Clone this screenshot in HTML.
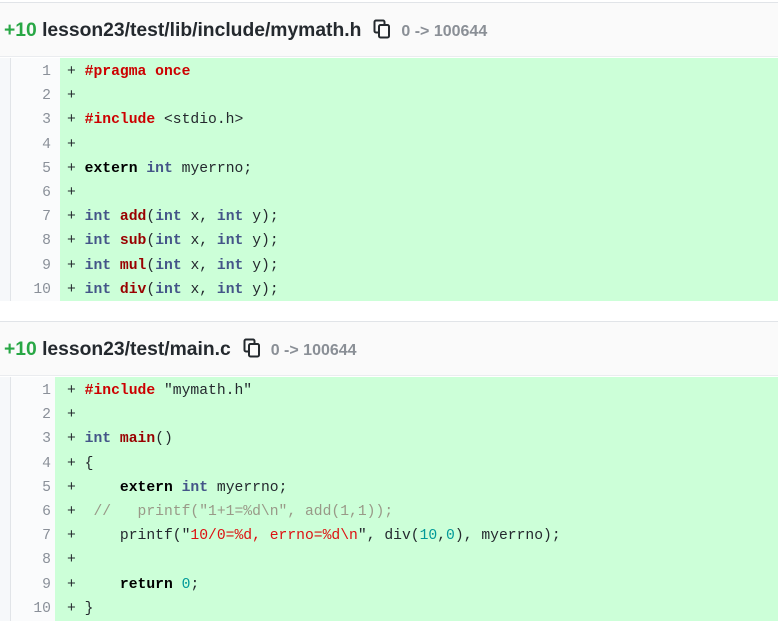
<!DOCTYPE html>
<html><head><meta charset="utf-8"><style>
*{margin:0;padding:0;box-sizing:border-box}
body{width:778px;height:637px;background:#fff;position:relative;overflow:hidden;font-family:"Liberation Sans",sans-serif}
.hdr{position:absolute;left:0;width:778px;height:55px;background:#fafafa;border-top:1px solid #e1e4e8;border-bottom:1px solid #eaecef}
.hdr .t{position:absolute;left:4px;top:16px;font-size:19.3px;font-weight:bold;color:#24292e;white-space:nowrap}
.hdr .t b{color:#28a745}
.hdr .m{font-size:16px;color:#8a8f96;font-weight:bold}
.blk{position:absolute;left:0;width:778px;background:#ccffd8}
.side{position:absolute;left:0;top:0;bottom:0;width:11px;background:#f6f8fa;border-right:1px solid #e1e4e8}
.gut{position:absolute;left:11px;top:0;bottom:0;background:#fafbfc}
.ln{position:absolute;height:24.2px;line-height:24.2px;font-family:"Liberation Mono",monospace;font-size:14.7px;white-space:pre;color:#24292e;margin-top:2px}
.n{color:#8a9099;text-align:right}
.k{font-weight:bold;color:#000}
.p{font-weight:bold;color:#c00}
.ty{font-weight:bold;color:#445588}
.f{font-weight:bold;color:#990000}
.s{color:#dd1111}
.num{color:#009999}
.c{color:#999988}
.cp{display:inline-block;vertical-align:-3px;margin:0 10px 0 12px}
</style></head><body>

<div class="hdr" style="top:2px"><div class="t"><b>+10</b> lesson23/test/lib/include/mymath.h<svg class="cp" width="18" height="20" viewBox="0 0 18 20"><rect x="1.5" y="1.5" width="10" height="12" rx="1.5" fill="none" stroke="#24292e" stroke-width="2"/><rect x="6" y="6" width="10" height="12.5" rx="1.5" fill="#fafafa" stroke="#24292e" stroke-width="2"/></svg><span class="m">0 -&gt; 100644</span></div></div>

<div class="blk" style="top:58px;height:243px">
<div class="side"></div><div class="gut" style="width:49px"></div>
</div>

<div class="hdr" style="top:321px"><div class="t"><b>+10</b> lesson23/test/main.c<svg class="cp" width="18" height="20" viewBox="0 0 18 20"><rect x="1.5" y="1.5" width="10" height="12" rx="1.5" fill="none" stroke="#24292e" stroke-width="2"/><rect x="6" y="6" width="10" height="12.5" rx="1.5" fill="#fafafa" stroke="#24292e" stroke-width="2"/></svg><span class="m">0 -&gt; 100644</span></div></div>

<div class="blk" style="top:377px;height:244px">
<div class="side"></div><div class="gut" style="width:44px"></div>
</div>

<div class="ln n" style="left:11px;width:40px;top:58px">1</div><div class="ln" style="left:67px;top:58px">+ <span class="p">#pragma once</span></div>
<div class="ln n" style="left:11px;width:40px;top:82.2px">2</div><div class="ln" style="left:67px;top:82.2px">+</div>
<div class="ln n" style="left:11px;width:40px;top:106.4px">3</div><div class="ln" style="left:67px;top:106.4px">+ <span class="p">#include</span> &lt;stdio.h&gt;</div>
<div class="ln n" style="left:11px;width:40px;top:130.6px">4</div><div class="ln" style="left:67px;top:130.6px">+</div>
<div class="ln n" style="left:11px;width:40px;top:154.8px">5</div><div class="ln" style="left:67px;top:154.8px">+ <span class="k">extern</span> <span class="ty">int</span> myerrno;</div>
<div class="ln n" style="left:11px;width:40px;top:179px">6</div><div class="ln" style="left:67px;top:179px">+</div>
<div class="ln n" style="left:11px;width:40px;top:203.2px">7</div><div class="ln" style="left:67px;top:203.2px">+ <span class="ty">int</span> <span class="f">add</span>(<span class="ty">int</span> x, <span class="ty">int</span> y);</div>
<div class="ln n" style="left:11px;width:40px;top:227.4px">8</div><div class="ln" style="left:67px;top:227.4px">+ <span class="ty">int</span> <span class="f">sub</span>(<span class="ty">int</span> x, <span class="ty">int</span> y);</div>
<div class="ln n" style="left:11px;width:40px;top:251.6px">9</div><div class="ln" style="left:67px;top:251.6px">+ <span class="ty">int</span> <span class="f">mul</span>(<span class="ty">int</span> x, <span class="ty">int</span> y);</div>
<div class="ln n" style="left:11px;width:40px;top:275.8px">10</div><div class="ln" style="left:67px;top:275.8px">+ <span class="ty">int</span> <span class="f">div</span>(<span class="ty">int</span> x, <span class="ty">int</span> y);</div>

<div class="ln n" style="left:11px;width:40px;top:377px">1</div><div class="ln" style="left:67px;top:377px">+ <span class="p">#include</span> "mymath.h"</div>
<div class="ln n" style="left:11px;width:40px;top:401.2px">2</div><div class="ln" style="left:67px;top:401.2px">+</div>
<div class="ln n" style="left:11px;width:40px;top:425.4px">3</div><div class="ln" style="left:67px;top:425.4px">+ <span class="ty">int</span> <span class="f">main</span>()</div>
<div class="ln n" style="left:11px;width:40px;top:449.6px">4</div><div class="ln" style="left:67px;top:449.6px">+ {</div>
<div class="ln n" style="left:11px;width:40px;top:473.8px">5</div><div class="ln" style="left:67px;top:473.8px">+     <span class="k">extern</span> <span class="ty">int</span> myerrno;</div>
<div class="ln n" style="left:11px;width:40px;top:498px">6</div><div class="ln" style="left:67px;top:498px">+  <span class="c">//   printf("1+1=%d\n", add(1,1));</span></div>
<div class="ln n" style="left:11px;width:40px;top:522.2px">7</div><div class="ln" style="left:67px;top:522.2px">+     printf("<span class="s">10/0=%d, errno=%d\n</span>", div(<span class="num">10</span>,<span class="num">0</span>), myerrno);</div>
<div class="ln n" style="left:11px;width:40px;top:546.4px">8</div><div class="ln" style="left:67px;top:546.4px">+</div>
<div class="ln n" style="left:11px;width:40px;top:570.6px">9</div><div class="ln" style="left:67px;top:570.6px">+     <span class="k">return</span> <span class="num">0</span>;</div>
<div class="ln n" style="left:11px;width:40px;top:594.8px">10</div><div class="ln" style="left:67px;top:594.8px">+ }</div>

</body></html>
